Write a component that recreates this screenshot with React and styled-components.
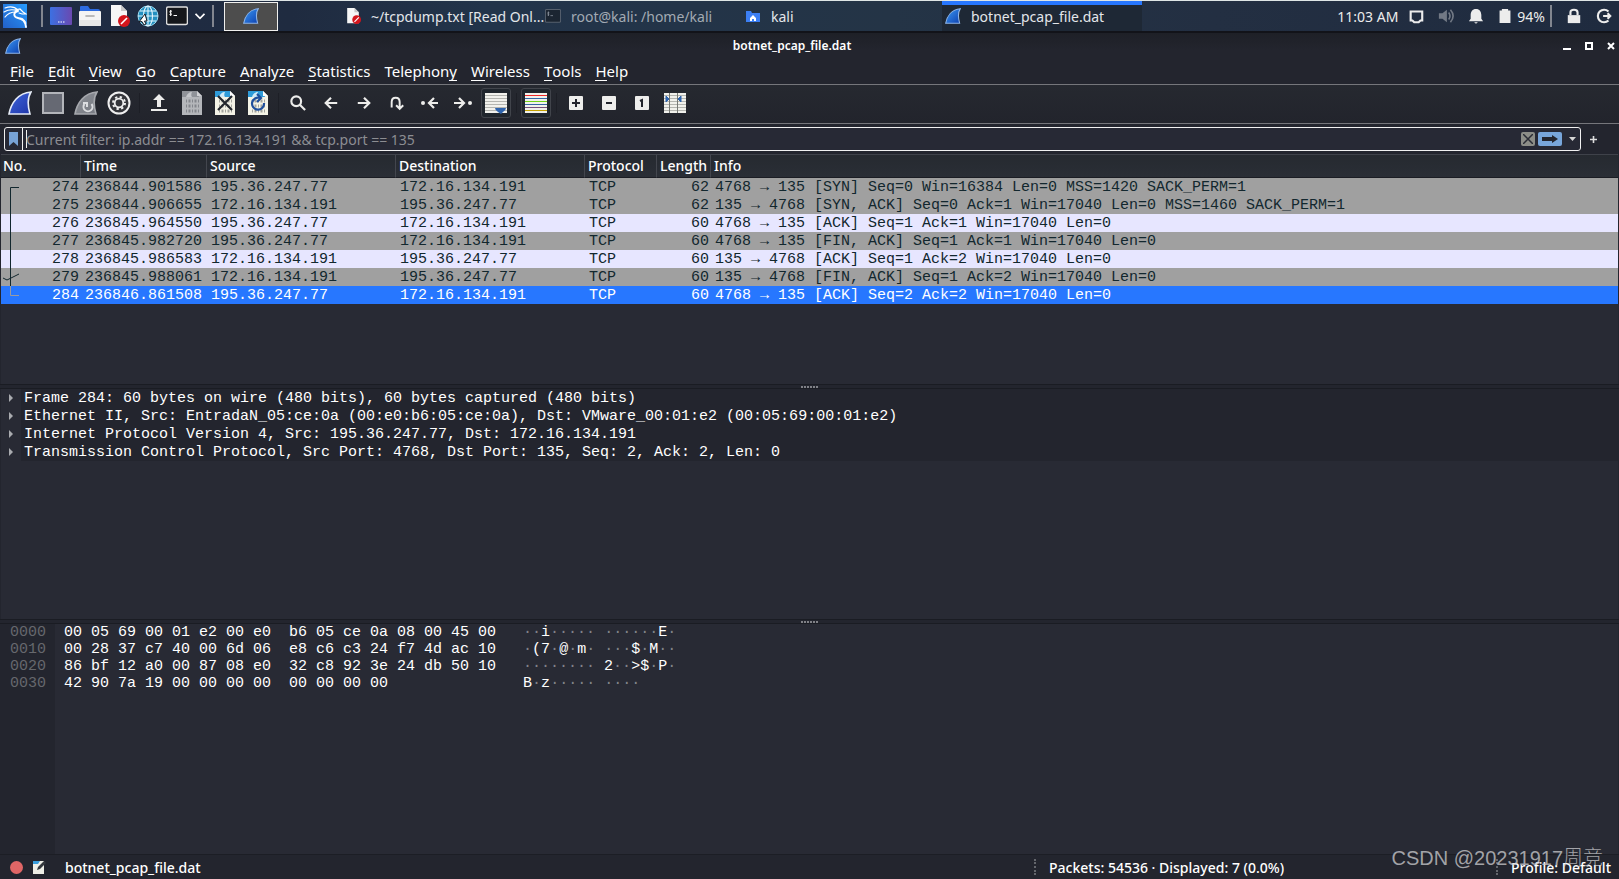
import React, { useState } from 'react';
import styled, { createGlobalStyle, css } from 'styled-components';

const GlobalStyle = createGlobalStyle`
  * { box-sizing: border-box; }
  body { margin: 0; background: #23252e; }
  button, input { font: inherit; color: inherit; }
  button { background: none; border: 0; padding: 0; }
  svg { display: block; flex: none; }
`;

const ui = '"Noto Sans", "Open Sans", sans-serif';
const mono = '"Liberation Mono", monospace';

const Desktop = styled.div`
  display: flex;
  flex-direction: column;
  height: 100vh;
  overflow: hidden;
  color: #fff;
  font-family: ${ui};
  font-size: 14px;
`;

const Panel = styled.header`
  display: flex;
  align-items: center;
  height: 33px;
  flex: none;
  padding: 0 7px 0 3px;
  border-top: 1px solid #dfe6e6;
  border-bottom: 2px solid #121319;
  background: linear-gradient(90deg, #1f2c44 0, #1f2b40 18%, #22344a 30%, #243446 55%, #232f42 75%, #1f2b3f 100%);
`;

const Launchers = styled.nav`
  display: flex;
  align-items: center;
  gap: 7px;
`;

const Divider = styled.span`
  width: 2px;
  height: 22px;
  margin-left: ${p => p.$space || 0}px;
  background: #82868f;
`;

const Workspace = styled.button`
  display: flex;
  align-items: center;
  justify-content: center;
  width: 54px;
  height: 29px;
  margin-left: 10px;
  border: 1px solid #f0f0ee;
  background: #4d4d4d;
`;

const Tasks = styled.nav`
  display: flex;
  flex: 1;
  margin-left: 64px;
`;

const Task = styled.button`
  display: flex;
  align-items: center;
  gap: 10px;
  width: 200px;
  height: 30px;
  padding-left: 3px;
  white-space: nowrap;
  color: ${p => (p.$dim ? '#a2aab3' : '#e3e6ea')};
  ${p => p.$active && css`
    background: #1e2835;
    box-shadow: inset 0 4px #2777ff;
  `}
`;

const Tray = styled.div`
  display: flex;
  align-items: center;
  color: #ececec;
  gap: ${p => p.$gap || 0}px;
`;

const TitleBar = styled.div`
  display: flex;
  align-items: center;
  height: 25px;
  flex: none;
  padding: 0 4px 0 5px;
  background: linear-gradient(#1e2027, #23252e 70%);
`;

const Title = styled.h1`
  flex: 1;
  margin: 0;
  text-align: center;
  font-size: 12px;
  font-weight: 600;
`;

const WindowButtons = styled.div`
  display: flex;
  align-items: center;
  gap: 14px;
`;

const MenuBar = styled.nav`
  display: flex;
  gap: 14px;
  height: 27px;
  flex: none;
  align-items: center;
  padding: 0 10px 1px;
  border-bottom: 1px solid #75767b;
  font-size: 15px;
`;

const Mnemonic = styled.span`
  border-bottom: 1px solid #fff;
  display: inline-block;
  line-height: 17px;
`;

const ToolBar = styled.div`
  display: flex;
  align-items: center;
  gap: 1px;
  height: 39px;
  flex: none;
  padding: 0 0 2px 4px;
  border-bottom: 1px solid #75767b;
  background: linear-gradient(#262930, #22242c);
`;

const ToolButton = styled.button`
  display: flex;
  align-items: center;
  justify-content: center;
  width: 32px;
  height: 32px;
  color: #ededeb;
`;

const Pressed = styled.span`
  display: flex;
  align-items: center;
  justify-content: center;
  width: 30px;
  height: 30px;
  border: 1px solid #41444b;
  border-radius: 3px;
  background: #20262d;
`;

const ToolGap = styled.span`
  width: 1px;
  height: 20px;
  margin: 0 2px 0 3px;
  background: #1d1f26;
`;

const FilterBar = styled.form`
  display: flex;
  align-items: center;
  height: 30px;
  flex: none;
  padding: 0 22px 0 4px;
  gap: 9px;
`;

const FilterBox = styled.div`
  display: flex;
  align-items: center;
  flex: 1;
  height: 24px;
  padding-left: 4px;
  border: 1px solid #f1f1f1;
  border-radius: 3px;
  background: #272935;
`;

const FilterInput = styled.input`
  flex: 1;
  height: 22px;
  padding: 0 0 0 3px;
  margin-left: 4px;
  border: 0;
  border-left: 1px solid #f1f1f1;
  outline: 0;
  background: linear-gradient(#f1f1f1, #f1f1f1) 3px 2px / 1px 18px no-repeat;
  &::placeholder { color: #8c8d92; opacity: 1; }
`;

const FilterActions = styled.div`
  display: flex;
  align-items: center;
  gap: 3px;
`;

const SquareButton = styled.button`
  display: flex;
  align-items: center;
  justify-content: center;
  width: ${p => p.$width}px;
  height: 14px;
  border-radius: 2px;
  background: ${p => p.$bg || 'none'};
`;

const Pane = styled.section`
  flex: 1 1 0;
  min-height: 0;
  overflow: hidden;
  margin: 0 1px;
  background: #282a34;
`;

const Splitter = styled.div`
  display: flex;
  align-items: center;
  justify-content: center;
  gap: 1px;
  height: 5px;
  flex: none;
  border: 1px solid #1a1c23;
  border-width: 1px 0;
  span { width: 2px; height: 2px; background: #808187; }
`;

const PacketTable = styled.table`
  width: 100%;
  table-layout: fixed;
  border-collapse: separate;
  border-spacing: 0;
  font-family: ${mono};
  font-size: 15px;
`;

const HeadCell = styled.th`
  height: 24px;
  padding: 0 0 0 3px;
  border-top: 1px solid #3f424a;
  border-bottom: 1px solid #1b1d24;
  border-right: 1px solid #43464e;
  background: linear-gradient(#262a30, #2a2e36);
  text-align: left;
  font-family: ${ui};
  font-size: 14px;
  font-weight: 500;
  line-height: 20px;
  &:first-child { padding-left: 2px; }
  &:last-child { border-right: 0; }
`;

const rowLook = {
  gray: 'background: #a0a0a0; color: #12272e;',
  tcp: 'background: #e7e6ff; color: #12272e;',
  selected: 'background: #2777ff; color: #fff;',
};

const PacketRow = styled.tr`
  height: 18px;
  ${p => rowLook[p.$look]}
`;

const Cell = styled.td`
  height: 18px;
  padding: 1px ${p => (p.$right ? 2 : 0)}px 0 ${p => (p.$right ? 0 : 4)}px;
  text-align: ${p => (p.$right ? 'right' : 'left')};
  line-height: 17px;
  white-space: pre;
`;

const NumberCell = styled.div`
  display: flex;
  justify-content: space-between;
  height: 17px;
  svg { margin-top: -1px; }
`;

const DetailList = styled.ul`
  margin: 0;
  padding: 0;
  list-style: none;
  font-family: ${mono};
  font-size: 15px;
`;

const DetailButton = styled.button`
  display: flex;
  align-items: center;
  width: 100%;
  height: 18px;
  padding-left: 7px;
  gap: 9px;
  white-space: pre;
  background: linear-gradient(90deg, #282a34 20px, #23252e 20px);
`;

const HexPane = styled(Pane)`
  display: flex;
  font-family: ${mono};
  font-size: 15px;
  line-height: 17px;
`;

const Column = styled.pre`
  margin: 0;
  font-family: inherit;
`;

const Offsets = styled(Column)`
  width: 54px;
  padding-left: 9px;
  background: #23252e;
  color: #66686d;
`;

const HexBytes = styled(Column)`
  padding-left: 9px;
`;

const Ascii = styled(Column)`
  padding-left: 27px;
  span { color: #818389; }
`;

const StatusBar = styled.footer`
  display: flex;
  align-items: center;
  position: relative;
  height: 25px;
  flex: none;
  padding: 0 8px 0 10px;
  border-top: 1px solid #1c1e25;
  font-weight: 500;
`;

const StatusName = styled.span`
  flex: 1;
  margin-left: 19px;
`;

const StatusPart = styled.span`
  display: flex;
  align-items: center;
  gap: 13px;
  width: ${p => (p.$wide ? '462px' : 'auto')};
  &::before {
    content: '';
    height: 16px;
    border-left: 2px dotted #64666c;
  }
`;

const Watermark = styled.div`
  position: absolute;
  right: 16px;
  bottom: 7px;
  font-family: "Liberation Sans", "Noto Sans CJK SC", sans-serif;
  font-size: 20px;
  font-weight: 300;
  line-height: 28px;
  color: rgba(205, 205, 208, 0.75);
`;

const finTones = {
  blue: ['#3b9af5', '#0d3fae'],
  indigo: ['#3f66dc', '#1f35a8'],
  gray: ['#8d9097', '#777a82'],
};

const Fin = ({ size = 16, tone = 'blue', outline = '#8fb5e8', children }) => (
  <svg width={size} height={size} viewBox="0 0 24 24">
    <defs>
      <linearGradient id={`fin-${tone}`} x1="0" y1="0" x2="1" y2="1">
        <stop offset="0" stopColor={finTones[tone][0]} />
        <stop offset="1" stopColor={finTones[tone][1]} />
      </linearGradient>
    </defs>
    <path d="M1 23C3 12 10 2 23 1c-4 6-3 15-1 22Z" fill={`url(#fin-${tone})`} stroke={outline} strokeWidth="1.6" />
    {children}
  </svg>
);

const KaliLogo = () => (
  <svg width="24" height="24" viewBox="0 0 24 24">
    <defs>
      <linearGradient id="kali" x1="0" y1="1" x2="1" y2="0">
        <stop offset="0" stopColor="#2360c8" /><stop offset="1" stopColor="#269cff" />
      </linearGradient>
    </defs>
    <rect width="24" height="24" fill="url(#kali)" />
    <g fill="none" stroke="#fff" strokeLinecap="round">
      <path d="M2 4c5-2 9-2 13 2M1 8c5-3 9-3 14-1M2 13c3-4 7-5 11-5" strokeWidth="1.2" />
      <path d="M12 6l5-1 3 3 3 2-4 0-3-1" strokeWidth="1.2" />
      <path d="M15 7c-5 1-5 6 0 7 5 1 7 3 8 9" strokeWidth="1.8" />
      <path d="M17 14c3 0 5 2 6 5" strokeWidth="1" />
    </g>
  </svg>
);

const DesktopIcon = () => (
  <svg width="22" height="22" viewBox="0 0 22 22">
    <defs>
      <linearGradient id="desk"><stop offset="0" stopColor="#3c70e2" /><stop offset="1" stopColor="#6a49b0" /></linearGradient>
    </defs>
    <rect y="2" width="22" height="18" rx="1" fill="url(#desk)" />
    <path d="M8 17h1.5M10.5 17H12M13 17h1.5" stroke="#fff" strokeWidth="1.2" />
  </svg>
);

const FilesIcon = () => (
  <svg width="22" height="22" viewBox="0 0 22 22">
    <path d="M1 9V2q0-1 1-1h7l2 3h8q2 0 2 2v3Z" fill="#2c6be0" />
    <rect y="6" width="22" height="15" rx="1" fill="#f4f4f4" />
    <path d="M0 15h22v5q0 1-1 1H1q-1 0-1-1Z" fill="#e6e6e6" />
    <path d="M7 11h8" stroke="#a7a7a7" strokeWidth="1.6" strokeLinecap="round" />
  </svg>
);

const EditorIcon = ({ size = 22 }) => (
  <svg width={size} height={size} viewBox="0 0 22 22">
    <path d="M3 0h10l6 6v15H3Z" fill="#f6f6f6" />
    <path d="M13 0v6h6Z" fill="#c8c8c8" />
    <circle cx="16" cy="16" r="6" fill="#d4151c" />
    <path d="M13 19l6-6" stroke="#fff" strokeWidth="1.6" />
  </svg>
);

const GlobeIcon = () => (
  <svg width="22" height="22" viewBox="0 0 22 22">
    <circle cx="11" cy="11" r="10" fill="#2390c0" stroke="#9cdcf2" />
    <g fill="none" stroke="#e2f6fd" strokeWidth="1.1">
      <ellipse cx="11" cy="11" rx="4.5" ry="10" />
      <path d="M11 1v20M1 11h20M3 6h16M3 16h16" />
    </g>
    <path d="M8 9L2 17l3-.5L7 20l2-1-1.5-3H10Z" fill="#fff" stroke="#15181f" strokeWidth="1" />
  </svg>
);

const TerminalIcon = ({ size = 22, dim }) => (
  <svg width={size} height={size} viewBox="0 0 22 22" opacity={dim ? 0.5 : 1}>
    <rect x=".6" y="2" width="20.8" height="17.5" rx="1.5" fill="#15171b" stroke={dim ? '#8a8d92' : '#dedede'} strokeWidth="1.4" />
    <path d="M6 6.5C4 5 3 7 4.5 8s1.5 2.5-1 1.5M4.7 5v6M7.5 10.5H11" stroke="#fff" strokeWidth="1" fill="none" />
  </svg>
);

const HomeFolderIcon = () => (
  <svg width="16" height="16" viewBox="0 0 16 16">
    <path d="M1 3h5l1 2h8v9H1Z" fill="#3c7ff4" />
    <path d="M5 10l3-3 3 3v3H9v-2H7v2H5Z" fill="#fff" />
  </svg>
);

const Glyph = ({ d, size = 18, fill, stroke = 2.4, children }) => (
  <svg width={size} height={size} viewBox="0 0 18 18" fill={fill ? 'currentColor' : 'none'} stroke={fill ? 'none' : 'currentColor'} strokeWidth={stroke}>
    {d && <path d={d} />}
    {children}
  </svg>
);

const GearIcon = () => (
  <svg width="24" height="24" viewBox="0 0 24 24" fill="none" stroke="#efefef">
    <circle cx="12" cy="12" r="10.5" fill="#34353a" strokeWidth="2" />
    <circle cx="12" cy="12" r="4.3" strokeWidth="1.8" />
    <circle cx="12" cy="12" r="6" strokeWidth="2" strokeDasharray="2.3 2.412" />
  </svg>
);

const CaptureFile = ({ gray, children }) => (
  <svg width="20" height="24" viewBox="0 0 20 24">
    <path d="M0 0h15l5 5v19H0Z" fill={gray ? '#b4b6ba' : '#f4f3e6'} />
    <path d="M0 0h15l2 6H0Z" fill={gray ? '#8f9298' : '#2f9bd8'} />
    <path d="M4 6c1-3 3-5 6-5-1 2-1 4 0 5Z" fill={gray ? '#c4c6ca' : '#cfe9f7'} />
    <path d="M15 0v5h5Z" fill={gray ? '#d0d1d4' : '#ffffff'} />
    <g stroke={gray ? '#83868c' : '#a3a49d'} strokeWidth="3" strokeDasharray="1 1.5 2 1.5">
      <path d="M4 10h13M4 15h13M4 20h13" />
    </g>
    {children}
  </svg>
);

const LinesIcon = ({ colors, children }) => (
  <svg width="22" height="22" viewBox="0 0 22 22">
    <rect y="1" width="22" height="20" fill="#f1f1ec" />
    {colors.map((c, i) => <rect key={i} y={3 + i * 3} width="22" height="1" fill={c} />)}
    {children}
  </svg>
);

const ZoomIcon = ({ d }) => (
  <svg width="14" height="14" viewBox="0 0 14 14">
    <rect width="14" height="14" rx="1" fill="#eeeeec" />
    <path d={d} fill="none" stroke="#22242c" strokeWidth="2" />
  </svg>
);

const LaunchButton = ({ label, children }) => <button aria-label={label}>{children}</button>;

const Tool = ({ label, pressed, children }) => (
  <ToolButton aria-label={label}>{pressed ? <Pressed>{children}</Pressed> : children}</ToolButton>
);

const grays = Array(6).fill('#b4b5b0');

const menus = [
  ['', 'F', 'ile'], ['', 'E', 'dit'], ['', 'V', 'iew'], ['', 'G', 'o'], ['', 'C', 'apture'],
  ['', 'A', 'nalyze'], ['', 'S', 'tatistics'], ['Telephon', 'y', ''], ['', 'W', 'ireless'],
  ['', 'T', 'ools'], ['', 'H', 'elp'],
];

const client = '195.36.247.77';
const server = '172.16.134.191';

const packets = [
  ['274', '236844.901586', client, server, '62', '4768 → 135 [SYN] Seq=0 Win=16384 Len=0 MSS=1420 SACK_PERM=1', 'gray'],
  ['275', '236844.906655', server, client, '62', '135 → 4768 [SYN, ACK] Seq=0 Ack=1 Win=17040 Len=0 MSS=1460 SACK_PERM=1', 'gray'],
  ['276', '236845.964550', client, server, '60', '4768 → 135 [ACK] Seq=1 Ack=1 Win=17040 Len=0', 'tcp'],
  ['277', '236845.982720', client, server, '60', '4768 → 135 [FIN, ACK] Seq=1 Ack=1 Win=17040 Len=0', 'gray'],
  ['278', '236845.986583', server, client, '60', '135 → 4768 [ACK] Seq=1 Ack=2 Win=17040 Len=0', 'tcp'],
  ['279', '236845.988061', server, client, '60', '135 → 4768 [FIN, ACK] Seq=1 Ack=2 Win=17040 Len=0', 'gray'],
  ['284', '236846.861508', client, server, '60', '4768 → 135 [ACK] Seq=2 Ack=2 Win=17040 Len=0', 'selected'],
];

const details = [
  'Frame 284: 60 bytes on wire (480 bits), 60 bytes captured (480 bits)',
  'Ethernet II, Src: EntradaN_05:ce:0a (00:e0:b6:05:ce:0a), Dst: VMware_00:01:e2 (00:05:69:00:01:e2)',
  'Internet Protocol Version 4, Src: 195.36.247.77, Dst: 172.16.134.191',
  'Transmission Control Protocol, Src Port: 4768, Dst Port: 135, Seq: 2, Ack: 2, Len: 0',
];

const hex = [
  ['0000', '00 05 69 00 01 e2 00 e0  b6 05 ce 0a 08 00 45 00', '··i····· ······E·'],
  ['0010', '00 28 37 c7 40 00 6d 06  e8 c6 c3 24 f7 4d ac 10', '·(7·@·m· ···$·M··'],
  ['0020', '86 bf 12 a0 00 87 08 e0  32 c8 92 3e 24 db 50 10', '········ 2··>$·P·'],
  ['0030', '42 90 7a 19 00 00 00 00  00 00 00 00', 'B·z····· ····'],
];

// conversation bracket drawn in front of the packet number
const Bracket = ({ index }) => {
  const last = packets.length - 1;
  let d = 'M9.5 0v18';
  if (index === 0) d = 'M18 9.5H9.5V18';
  if (index === last) d = 'M9.5 0v9.5H18';
  return (
    <svg width="20" height="18" fill="none" stroke={index === last ? '#9b9ba0' : '#12272e'}>
      <path d={d} />
      {index === last - 1 && <path d="M2 10l4 2L18 6" />}
    </svg>
  );
};

const Grip = ({ label }) => (
  <Splitter role="separator" aria-label={label}>
    {[0, 1, 2, 3, 4, 5].map(i => <span key={i} />)}
  </Splitter>
);

const TopPanel = () => (
  <Panel>
    <Launchers>
      <LaunchButton label="Applications"><KaliLogo /></LaunchButton>
      <Divider $space={7} />
      <LaunchButton label="Show desktop"><DesktopIcon /></LaunchButton>
      <LaunchButton label="Files"><FilesIcon /></LaunchButton>
      <LaunchButton label="Text editor"><EditorIcon /></LaunchButton>
      <LaunchButton label="Web browser"><GlobeIcon /></LaunchButton>
      <LaunchButton label="Terminal"><TerminalIcon /></LaunchButton>
      <LaunchButton label="More terminals"><Glyph size={10} d="M1 5l8 8 8-8" stroke={3} /></LaunchButton>
      <Divider />
    </Launchers>
    <Workspace aria-label="Workspace 1"><Fin /></Workspace>
    <Tasks>
      <Task><EditorIcon size={16} />~/tcpdump.txt [Read Onl...</Task>
      <Task $dim><TerminalIcon size={16} dim />root@kali: /home/kali</Task>
      <Task><HomeFolderIcon />kali</Task>
      <Task $active><Fin />botnet_pcap_file.dat</Task>
    </Tasks>
    <Tray $gap={10}>
      <time>11:03 AM</time>
      <Tray $gap={14}>
        <Glyph size={16} d="M3 4h13v10h-2l-2 2H7l-2-2H3Z" />
        <Glyph size={16} fill><g opacity=".4"><path d="M1 6h4l5-4v14l-5-4H1Z" /><path d="M12 5q3 4 0 8M14 2q6 7 0 14" fill="none" stroke="currentColor" strokeWidth="1.8" /></g></Glyph>
        <Glyph size={16} fill d="M9 1c4 0 6 3 6 7v4l2 3H1l2-3V8c0-4 2-7 6-7ZM7 16h4q-2 3-4 0Z" />
        <Tray $gap={5}>
          <Glyph size={14} fill d="M5 0h8v2h3v16H2V2h3Z" />
          94%
          <Divider />
        </Tray>
        <Glyph size={16} d="M5 8V5q0-3 4-3t4 3v3"><path d="M2 8h14v9H2Z" fill="currentColor" stroke="none" /></Glyph>
        <Glyph size={16} d="M14 4a7 7 0 1 0 0 10M8 9h7M13 6l3 3-3 3" />
      </Tray>
    </Tray>
  </Panel>
);

const MainToolBar = () => (
  <ToolBar role="toolbar">
    <Tool label="Start capture"><Fin size={24} tone="indigo" outline="#e6ecf7" /></Tool>
    <Tool label="Stop capture"><svg width="22" height="22"><rect x="1" y="1" width="20" height="20" fill="#666973" stroke="#b3b5ba" strokeWidth="2" /></svg></Tool>
    <Tool label="Restart capture">
      <Fin size={24} tone="gray" outline="#a6a8ad">
        <path d="M17.5 13a4.5 4.5 0 1 1-7 0M9 12h4v4" fill="none" stroke="#dcdde0" strokeWidth="2" />
      </Fin>
    </Tool>
    <Tool label="Capture options"><GearIcon /></Tool>
    <ToolGap />
    <Tool label="Open"><Glyph fill d="M9 0l6 6h-4v7H7V6H3ZM1 15h16v2H1Z" /></Tool>
    <Tool label="Save"><CaptureFile gray /></Tool>
    <Tool label="Close"><CaptureFile><path d="M3 5l14 14M17 5L3 19" stroke="#23272d" strokeWidth="2.2" /></CaptureFile></Tool>
    <Tool label="Reload"><CaptureFile><path d="M12 7a6 6 0 1 0 4 5M9 3l4 4-4 4" fill="none" stroke="#1f4f9c" strokeWidth="2.2" /></CaptureFile></Tool>
    <ToolGap />
    <Tool label="Find packet"><Glyph size={16}><circle cx="7" cy="7" r="5.5" /><path d="M11 11l6 6" /></Glyph></Tool>
    <Tool label="Previous packet"><Glyph size={16} d="M16 9H3M9 3L3 9l6 6" /></Tool>
    <Tool label="Next packet"><Glyph size={16} d="M2 9h13M9 3l6 6-6 6" /></Tool>
    <Tool label="Go to packet"><Glyph size={16} d="M3 14V8q0-5 4.5-5T12 8v7M8 11.5l4 4 4-4" stroke={2.2} /></Tool>
    <Tool label="First packet"><Glyph d="M17 9H8M13 4L8 9l5 5" stroke={2.2}><circle cx="2" cy="9" r="2" fill="currentColor" stroke="none" /></Glyph></Tool>
    <Tool label="Last packet"><Glyph d="M0 9h10M5 4l5 5-5 5" stroke={2.2}><circle cx="16" cy="9" r="2" fill="currentColor" stroke="none" /></Glyph></Tool>
    <Tool label="Auto scroll" pressed>
      <LinesIcon colors={grays}><path d="M10 16h11q0 2-3 4l-2 2-3-2q-3-2-3-4Z" fill="#2f64ad" /></LinesIcon>
    </Tool>
    <ToolGap />
    <Tool label="Colorize" pressed>
      <LinesIcon colors={['#ef2929', '#3465a4', '#73d216', '#3465a4', '#75507b', '#c4a000']} />
    </Tool>
    <ToolGap />
    <Tool label="Zoom in"><ZoomIcon d="M3 7h8M7 3v8" /></Tool>
    <Tool label="Zoom out"><ZoomIcon d="M4 7h6" /></Tool>
    <Tool label="Normal size"><ZoomIcon d="M5 5l2-1v7" /></Tool>
    <Tool label="Resize columns">
      <LinesIcon colors={grays}>
        <path d="M5.5 1v20M13.5 1v20" stroke="#777a75" />
        <path d="M2 4l3 3-3 3ZM17 4v6l-3-3Z" fill="#2f64ad" stroke="#2f64ad" />
      </LinesIcon>
    </Tool>
  </ToolBar>
);

const App = () => {
  const [filter, setFilter] = useState('');

  return (
    <Desktop>
      <GlobalStyle />
      <TopPanel />
      <TitleBar>
        <Fin />
        <Title>botnet_pcap_file.dat</Title>
        <WindowButtons>
          <button aria-label="Minimize"><svg width="8" height="8"><path d="M0 7h8" stroke="#fff" strokeWidth="2" /></svg></button>
          <button aria-label="Maximize"><svg width="8" height="8"><path d="M1 1h6v6H1Z" fill="none" stroke="#fff" strokeWidth="2" /></svg></button>
          <button aria-label="Close window"><svg width="8" height="8"><path d="M1 1l6 6M7 1L1 7" stroke="#fff" strokeWidth="2" /></svg></button>
        </WindowButtons>
      </TitleBar>
      <MenuBar>
        {menus.map(([before, key, after]) => (
          <button key={before + key + after}>{before}<Mnemonic>{key}</Mnemonic>{after}</button>
        ))}
      </MenuBar>
      <MainToolBar />
      <FilterBar onSubmit={e => e.preventDefault()}>
        <FilterBox>
          <button type="button" aria-label="Bookmarks"><svg width="9" height="14"><path d="M0 0h9v14l-4.5-4L0 14Z" fill="#78a3d6" /></svg></button>
          <FilterInput
            aria-label="Display filter"
            placeholder="Current filter: ip.addr == 172.16.134.191 && tcp.port == 135"
            value={filter}
            onChange={e => setFilter(e.target.value)}
          />
          <FilterActions>
            <SquareButton type="button" $width={14} $bg="#8c8d87" aria-label="Clear filter" onClick={() => setFilter('')}>
              <svg width="10" height="10"><path d="M0 0l10 10M10 0L0 10" stroke="#2a2c35" strokeWidth="1.5" /></svg>
            </SquareButton>
            <SquareButton $width={24} $bg="#78a6db" aria-label="Apply filter">
              <svg width="16" height="10"><path d="M0 3h10V1l6 4-6 4V7H0Z" fill="#23252e" /></svg>
            </SquareButton>
            <SquareButton type="button" $width={15} aria-label="Recent filters">
              <svg width="7" height="4"><path d="M0 0h7L3.5 4Z" fill="#d6d6d6" /></svg>
            </SquareButton>
          </FilterActions>
        </FilterBox>
        <button type="button" aria-label="Add filter button"><svg width="7" height="7"><path d="M3.5 0v7M0 3.5h7" stroke="#dcdcdc" strokeWidth="1.6" /></svg></button>
      </FilterBar>
      <Pane>
        <PacketTable>
          <colgroup>
            {[80, 126, 189, 189, 72, 54].map((w, i) => <col key={i} width={w} />)}
            <col />
          </colgroup>
          <thead>
            <tr>
              {['No.', 'Time', 'Source', 'Destination', 'Protocol', 'Length', 'Info'].map(h => <HeadCell key={h}>{h}</HeadCell>)}
            </tr>
          </thead>
          <tbody>
            {packets.map(([no, time, src, dst, len, info, look], i) => (
              <PacketRow key={no} $look={look}>
                <Cell $right><NumberCell><Bracket index={i} />{no}</NumberCell></Cell>
                <Cell>{time}</Cell>
                <Cell>{src}</Cell>
                <Cell>{dst}</Cell>
                <Cell>TCP</Cell>
                <Cell $right>{len}</Cell>
                <Cell>{info}</Cell>
              </PacketRow>
            ))}
          </tbody>
        </PacketTable>
      </Pane>
      <Grip label="Resize packet list" />
      <Pane>
        <DetailList>
          {details.map(line => (
            <li key={line}>
              <DetailButton>
                <svg width="7" height="8"><path d="M1 0l4 4-4 4Z" fill="#a9abaf" /></svg>
                {line}
              </DetailButton>
            </li>
          ))}
        </DetailList>
      </Pane>
      <Grip label="Resize packet details" />
      <HexPane>
        <Offsets>{hex.map(h => h[0]).join('\n')}</Offsets>
        <HexBytes>{hex.map(h => h[1]).join('\n')}</HexBytes>
        <Ascii>
          {hex.map(h => h[2]).join('\n').split(/(·+)/).map((s, i) => (s[0] === '·' ? <span key={i}>{s}</span> : s))}
        </Ascii>
      </HexPane>
      <StatusBar>
        <Tray $gap={9}>
          <button aria-label="Expert information"><svg width="13" height="13"><circle cx="6.5" cy="6.5" r="6.5" fill="#e06666" /></svg></button>
          <button aria-label="Capture comment">
            <svg width="14" height="14" viewBox="0 0 14 14">
              <path d="M1 1h11v13H1Z" fill="#eeeee6" />
              <path d="M1 1h7L6 4H1Z" fill="#3a9ddb" />
              <path d="M5 10l1-3 6-6 2 2-6 6Z" fill="#33373c" />
            </svg>
          </button>
        </Tray>
        <StatusName>botnet_pcap_file.dat</StatusName>
        <StatusPart $wide>Packets: 54536 · Displayed: 7 (0.0%)</StatusPart>
        <StatusPart>Profile: Default</StatusPart>
        <Watermark>CSDN @20231917周竞</Watermark>
      </StatusBar>
    </Desktop>
  );
};

export default App;
